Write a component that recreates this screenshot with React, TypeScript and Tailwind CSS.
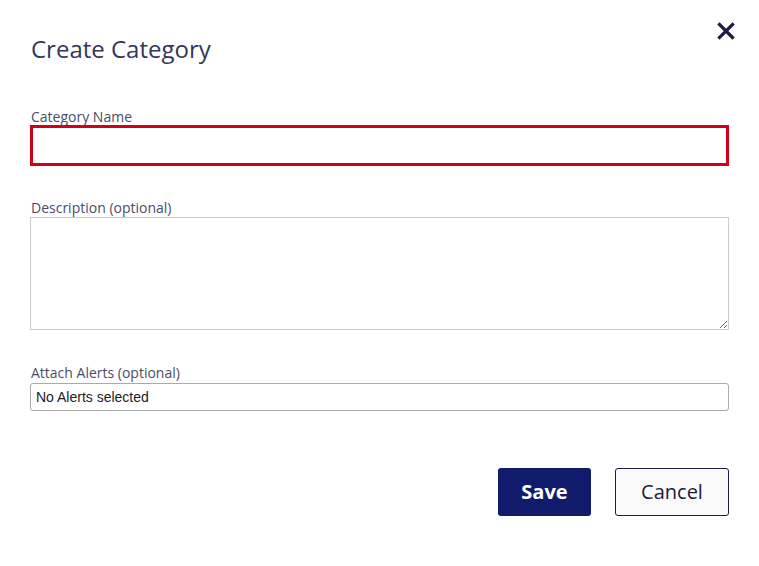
import { useState } from "react";

export default function App() {
  const [name, setName] = useState("");
  const [description, setDescription] = useState("");

  return (
    <div className="min-h-screen bg-white font-['Open_Sans',sans-serif] text-[#3b3d5c]">
      <div className="relative px-[30px] pt-[31px] pb-[50px]">
        {/* Close */}
        <button
          aria-label="Close"
          className="absolute right-[24px] top-[22px] flex h-[18px] w-[18px] items-center justify-center"
        >
          <svg viewBox="0 0 18 18" className="h-[18px] w-[18px]">
            <path
              d="M2.5 2.5 L15.5 15.5 M15.5 2.5 L2.5 15.5"
              stroke="#1c1c45"
              strokeWidth="3.2"
              strokeLinecap="square"
              fill="none"
            />
          </svg>
        </button>

        <h1 className="pl-px text-[24px] leading-[36px] font-normal text-[#34365a]">
          Create Category
        </h1>

        <div className="mt-[42px]">
          <label className="block pl-px text-[14px] leading-[16px] text-[#4a4c68]">
            Category Name
          </label>
          <input
            value={name}
            onChange={(e) => setName(e.target.value)}
            className="block h-[41px] w-full border-[3px] border-[#d0021b] bg-white px-2 text-[14px] outline-none"
          />
        </div>

        <div className="mt-[34px]">
          <label className="mb-px block pl-px text-[14px] leading-[16px] text-[#4a4c68]">
            Description (optional)
          </label>
          <textarea
            value={description}
            onChange={(e) => setDescription(e.target.value)}
            className="block h-[113px] w-full border border-[#cccccc] bg-white px-2 py-1 text-[14px] outline-none"
          />
        </div>

        <div className="mt-[35px]">
          <label className="mb-[2px] block pl-px text-[14px] leading-[16px] text-[#4a4c68]">
            Attach Alerts (optional)
          </label>
          <div className="flex h-[28px] w-full items-center rounded-[3px] border border-[#aaaaaa] bg-white px-[5px] font-['Liberation_Sans',Arial,sans-serif] text-[14px] text-[#222]">
            No Alerts selected
          </div>
        </div>

        <div className="mt-[57px] flex justify-end gap-[24px]">
          <button className="h-[48px] w-[93px] rounded-[3px] bg-[#101c6b] text-[20px] font-bold text-white">
            Save
          </button>
          <button className="h-[48px] w-[114px] rounded-[3px] border border-[#1c1c45] bg-[#fafafa] text-[20px] text-[#1c1c3e]">
            Cancel
          </button>
        </div>
      </div>
    </div>
  );
}
